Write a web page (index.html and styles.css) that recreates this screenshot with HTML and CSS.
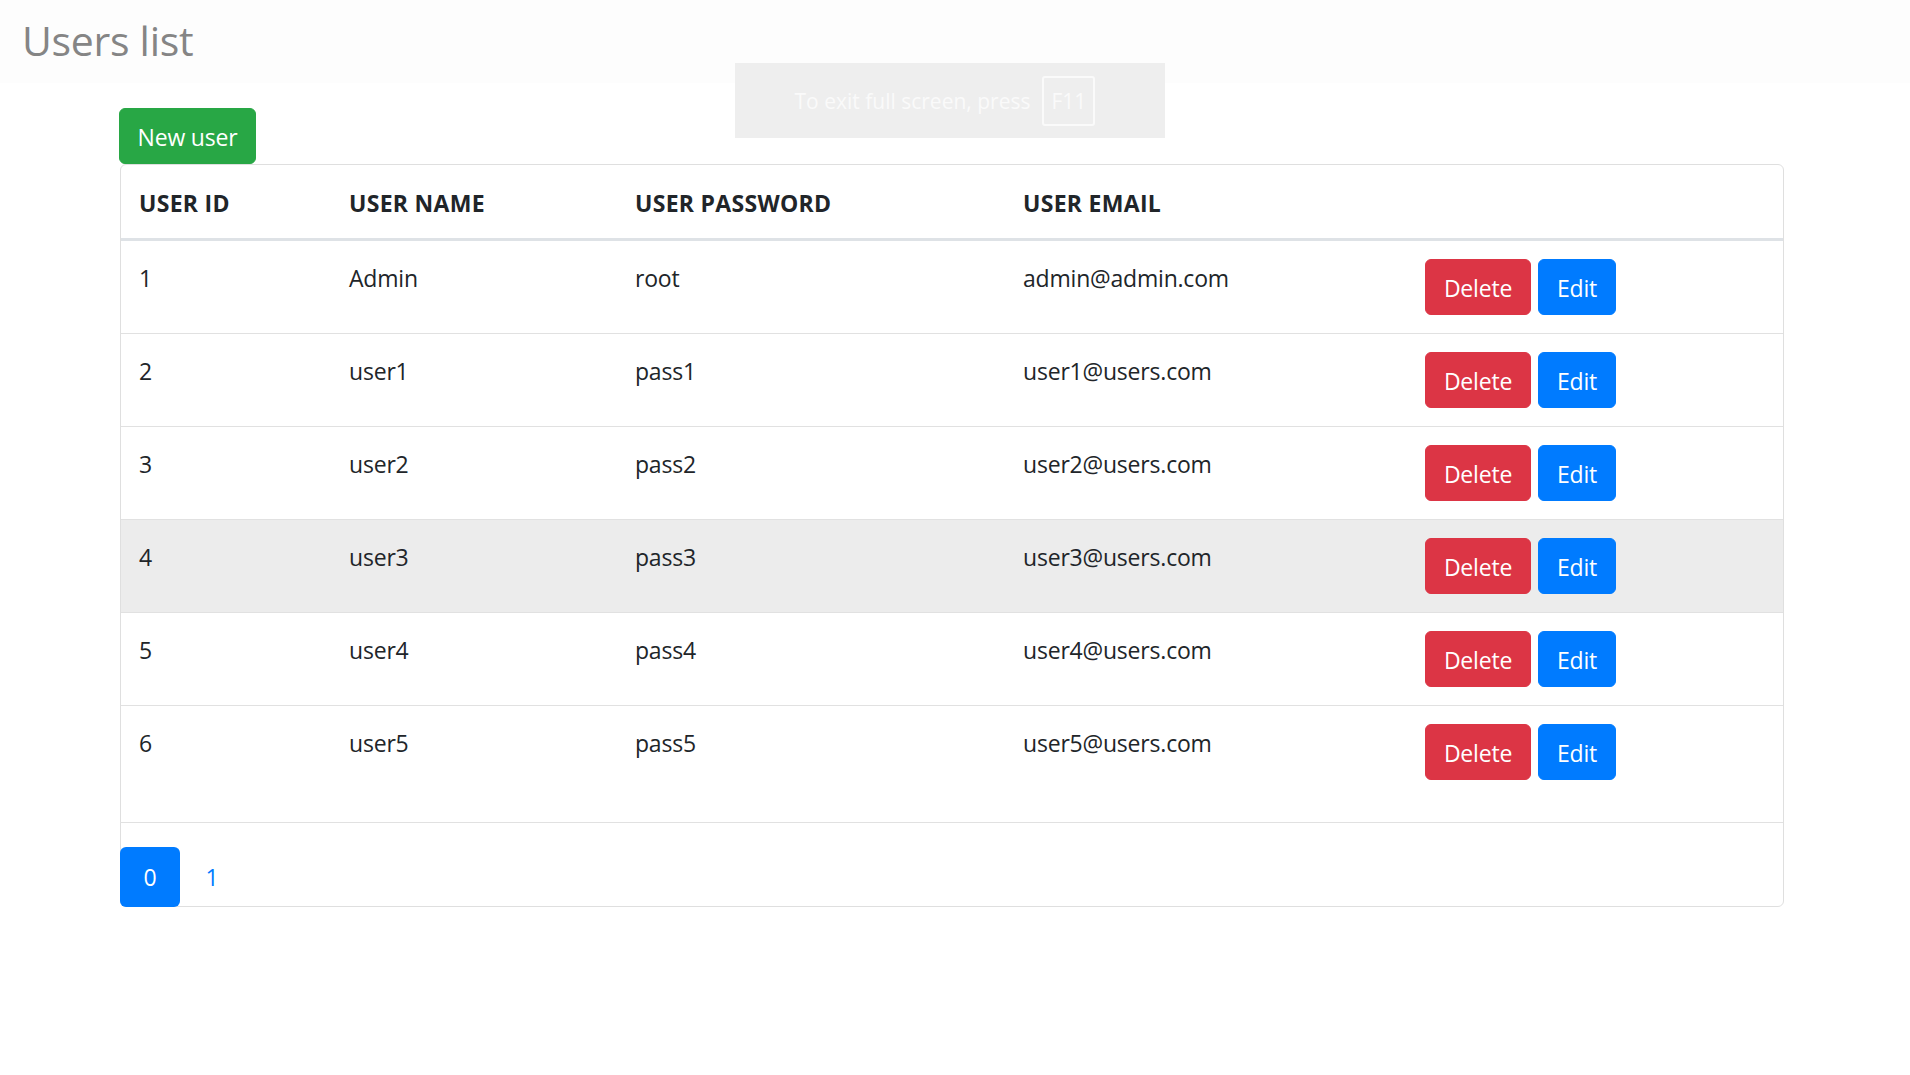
FILE: index.html
```html
<!DOCTYPE html>
<html lang="en">
<head>
<meta charset="utf-8">
<title>Users list</title>
<link rel="stylesheet" href="styles.css">
</head>
<body>
<header class="topbar">
  <h1 class="title">Users list</h1>
</header>
<main class="container">
  <button class="btn btn-new">New user</button>
  <div class="card">
    <table class="users">
      <colgroup>
        <col class="c1"><col class="c2"><col class="c3"><col class="c4"><col class="c5">
      </colgroup>
      <thead>
        <tr><th>USER ID</th><th>USER NAME</th><th>USER PASSWORD</th><th>USER EMAIL</th><th></th></tr>
      </thead>
      <tbody>
        <tr><td>1</td><td>Admin</td><td>root</td><td>admin@admin.com</td><td class="act"><div class="actions"><button class="btn btn-del">Delete</button><button class="btn btn-edit">Edit</button></div></td></tr>
        <tr><td>2</td><td>user1</td><td>pass1</td><td>user1@users.com</td><td class="act"><div class="actions"><button class="btn btn-del">Delete</button><button class="btn btn-edit">Edit</button></div></td></tr>
        <tr><td>3</td><td>user2</td><td>pass2</td><td>user2@users.com</td><td class="act"><div class="actions"><button class="btn btn-del">Delete</button><button class="btn btn-edit">Edit</button></div></td></tr>
        <tr class="hover"><td>4</td><td>user3</td><td>pass3</td><td>user3@users.com</td><td class="act"><div class="actions"><button class="btn btn-del">Delete</button><button class="btn btn-edit">Edit</button></div></td></tr>
        <tr><td>5</td><td>user4</td><td>pass4</td><td>user4@users.com</td><td class="act"><div class="actions"><button class="btn btn-del">Delete</button><button class="btn btn-edit">Edit</button></div></td></tr>
        <tr class="last"><td>6</td><td>user5</td><td>pass5</td><td>user5@users.com</td><td class="act"><div class="actions"><button class="btn btn-del">Delete</button><button class="btn btn-edit">Edit</button></div></td></tr>
      </tbody>
    </table>
    <nav class="pager">
      <a class="page active">0</a>
      <a class="page">1</a>
    </nav>
  </div>
</main>
<div class="fs-toast">To exit full screen, press <span class="key">F11</span></div>
</body>
</html>
```
FILE: styles.css
```css
html, body {
  margin: 0;
  padding: 0;
  background: #ffffff;
  font-family: "Open Sans", "Noto Sans", sans-serif;
  color: #212529;
}
.topbar {
  height: 83px;
  background: #fdfdfd;
  padding-left: 22px;
  box-sizing: border-box;
}
.title {
  margin: 0;
  font-size: 41px;
  font-weight: 400;
  color: #858585;
  line-height: 84px;
  position: relative;
  top: -2px;
  letter-spacing: -0.3px;
}
.container {
  margin-left: 119px;
  width: 1665px;
  padding-top: 25px;
}
.btn {
  font-family: "Open Sans", "Noto Sans", sans-serif;
  font-size: 23px;
  line-height: 36px;
  padding: 9px 17px;
  border: 1px solid transparent;
  border-radius: 6px;
  color: #fff;
  cursor: pointer;
  letter-spacing: -0.2px;
}
.btn-new {
  display: block;
  background: #28a745;
  border-color: #28a745;
  height: 56px;
  width: 137px;
  padding: 2px 0 0;
}
.card {
  border: 1px solid #dfdfdf;
  border-radius: 6px;
  margin-left: 1px;
  width: 1662px;
}
.users {
  width: 100%;
  border-collapse: collapse;
  table-layout: fixed;
  font-size: 23px;
  letter-spacing: -0.2px;
}
.c1 { width: 210px; }
.c2 { width: 286px; }
.c3 { width: 388px; }
.c4 { width: 402px; }
.c5 { width: auto; }
.users th {
  text-align: left;
  font-weight: 700;
  padding: 20px 18px 17px;
  line-height: 36px;
  border-bottom: 3px solid #dee2e6;
  letter-spacing: 0.3px;
}
.users td {
  vertical-align: top;
  padding: 19px 18px 17px;
  line-height: 36px;
  border-top: 1px solid #e1e1e1;
  height: 56px;
}
.users td.act {
  padding-top: 18px;
  padding-bottom: 18px;
}
.users tbody tr:first-child td { border-top: none; }
.users tr.hover td { background: #ececec; }
.users tr.last td { padding-bottom: 41px; }
.users tr.last td.act { padding-bottom: 42px; }
.users td .actions {
  display: flex;
  gap: 7px;
}
.actions .btn { height: 56px; }
.btn-del {
  background: #dc3545;
  border-color: #dc3545;
  width: 106px;
  padding: 2px 0 0;
}
.btn-edit {
  background: #007bff;
  border-color: #007bff;
  width: 78px;
  padding: 2px 0 0;
}
.pager {
  border-top: 1px solid #e1e1e1;
  padding-top: 24px;
  display: flex;
  align-items: center;
  margin-left: -1px;
  margin-bottom: -1px;
}
.page {
  display: flex;
  align-items: center;
  justify-content: center;
  height: 60px;
  width: 60px;
  font-size: 23px;
  color: #007bff;
  border-radius: 6px;
}
.page.active {
  background: #007bff;
  color: #fff;
}
.page + .page {
  padding-left: 2px;
}
.fs-toast {
  position: fixed;
  left: 735px;
  top: 63px;
  width: 430px;
  height: 75px;
  box-sizing: border-box;
  background: #eeeeee;
  color: #fafafa;
  font-size: 21px;
  display: flex;
  align-items: center;
  justify-content: center;
  gap: 12px;
  padding-right: 10px;
}
.fs-toast .key {
  display: inline-flex;
  align-items: center;
  justify-content: center;
  width: 53px;
  height: 50px;
  box-sizing: border-box;
  border: 2px solid #fafafa;
  border-radius: 3px;
}
```
